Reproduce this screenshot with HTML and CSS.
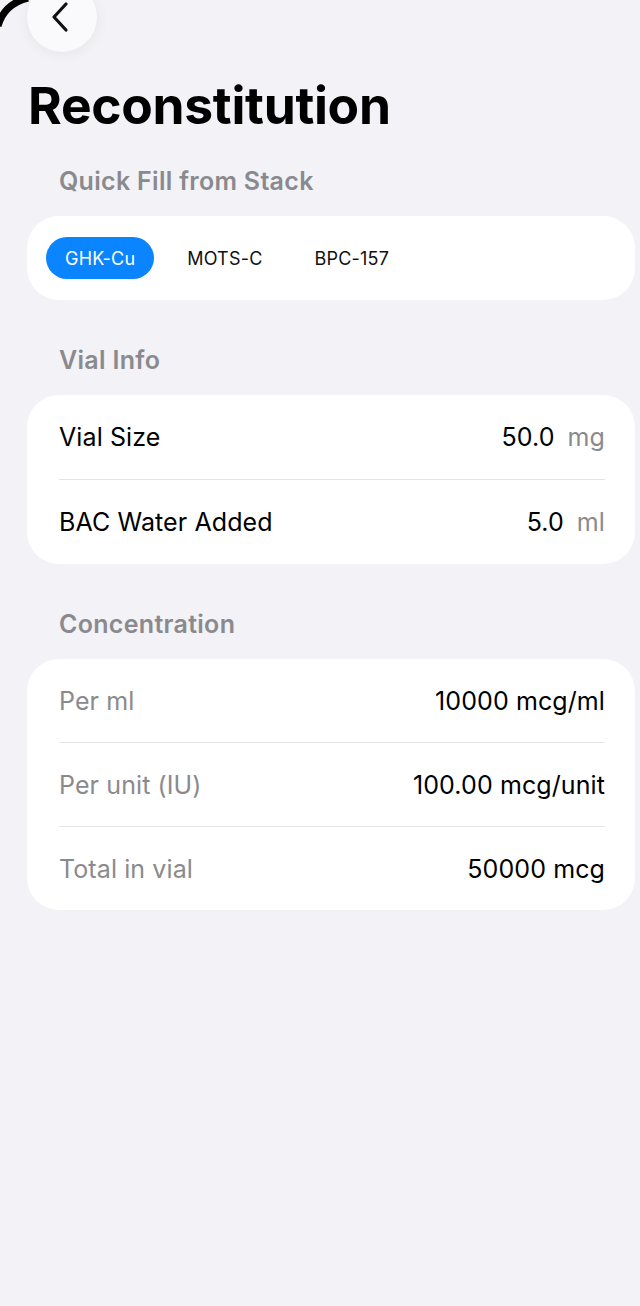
FILE: index.html
```html
<!DOCTYPE html>
<html lang="en">

<head>
    <meta charset="UTF-8">
    <meta name="viewport" content="width=device-width, initial-scale=1.0">
    <title>Reconstitution</title>
    <link rel="stylesheet" href="styles.css">
</head>

<body>
    <svg class="corner" width="40" height="40" viewBox="0 0 40 40">
        <path d="M-2 26 Q4 4 28 -2" fill="none" stroke="#000" stroke-width="7" />
    </svg>

    <div class="page">
        <button class="back-btn" aria-label="Back">
            <svg width="22" height="32" viewBox="0 0 22 32">
                <path d="M17 3 L5 16 L17 29" fill="none" stroke="#111" stroke-width="3.2" stroke-linecap="round" stroke-linejoin="round" />
            </svg>
        </button>

        <h1 class="title">Reconstitution</h1>

        <h2 class="section-title first">Quick Fill from Stack</h2>
        <div class="card chips">
            <span class="chip active">GHK-Cu</span>
            <span class="chip">MOTS-C</span>
            <span class="chip">BPC-157</span>
        </div>

        <h2 class="section-title">Vial Info</h2>
        <div class="card">
            <div class="row">
                <span class="label">Vial Size</span>
                <span class="value">50.0<span class="unit">mg</span></span>
            </div>
            <div class="row">
                <span class="label">BAC Water Added</span>
                <span class="value">5.0<span class="unit">ml</span></span>
            </div>
        </div>

        <h2 class="section-title">Concentration</h2>
        <div class="card">
            <div class="row short">
                <span class="label muted">Per ml</span>
                <span class="value">10000 mcg/ml</span>
            </div>
            <div class="row short">
                <span class="label muted">Per unit (IU)</span>
                <span class="value">100.00 mcg/unit</span>
            </div>
            <div class="row short">
                <span class="label muted">Total in vial</span>
                <span class="value">50000 mcg</span>
            </div>
        </div>
    </div>
</body>

</html>
```

FILE: styles.css
```css
body {
    margin: 0;
    background-color: #f2f2f7;
    font-family: 'Inter', 'Roboto', sans-serif;
    color: #000;
    overflow: hidden;
}

.corner {
    position: absolute;
    top: 0;
    left: 0;
}

.page {
    padding: 0 5px 0 27px;
}

.back-btn {
    display: flex;
    align-items: center;
    justify-content: center;
    width: 70px;
    height: 70px;
    margin-top: -18px;
    padding: 0 4px 0 0;
    border: none;
    border-radius: 50%;
    background-color: #fafafc;
    box-shadow: 0 2px 14px rgba(0, 0, 0, 0.06);
}

.title {
    margin: 23px 0 0 1px;
    font-size: 51.5px;
    font-weight: 700;
    line-height: 60px;
    letter-spacing: -0.3px;
}

.section-title {
    margin: 45px 0 20px 32px;
    font-size: 25px;
    font-weight: 600;
    line-height: 30px;
    letter-spacing: 0.3px;
    color: #8a8a8e;
}

.section-title.first {
    margin-top: 31px;
}

.card {
    background-color: #fff;
    border-radius: 32px;
    padding: 0 30px 0 32px;
}

.chips {
    display: flex;
    align-items: center;
    gap: 14px;
    height: 84px;
    padding: 0 19px;
}

.chip {
    display: flex;
    align-items: center;
    height: 42px;
    padding: 0 19px;
    border-radius: 21px;
    font-size: 18px;
    letter-spacing: 0.2px;
    color: #111;
}

.chip.active {
    background-color: #0a84ff;
    color: #fff;
}

.row {
    display: flex;
    justify-content: space-between;
    align-items: center;
    height: 84px;
    font-size: 25px;
    letter-spacing: 0.1px;
}

.row.short {
    height: 83px;
}

.row + .row {
    border-top: 1.5px solid #e4e4e8;
}

.label.muted {
    color: #8a8a8e;
}

.unit {
    margin-left: 13px;
    color: #8a8a8e;
}
```
